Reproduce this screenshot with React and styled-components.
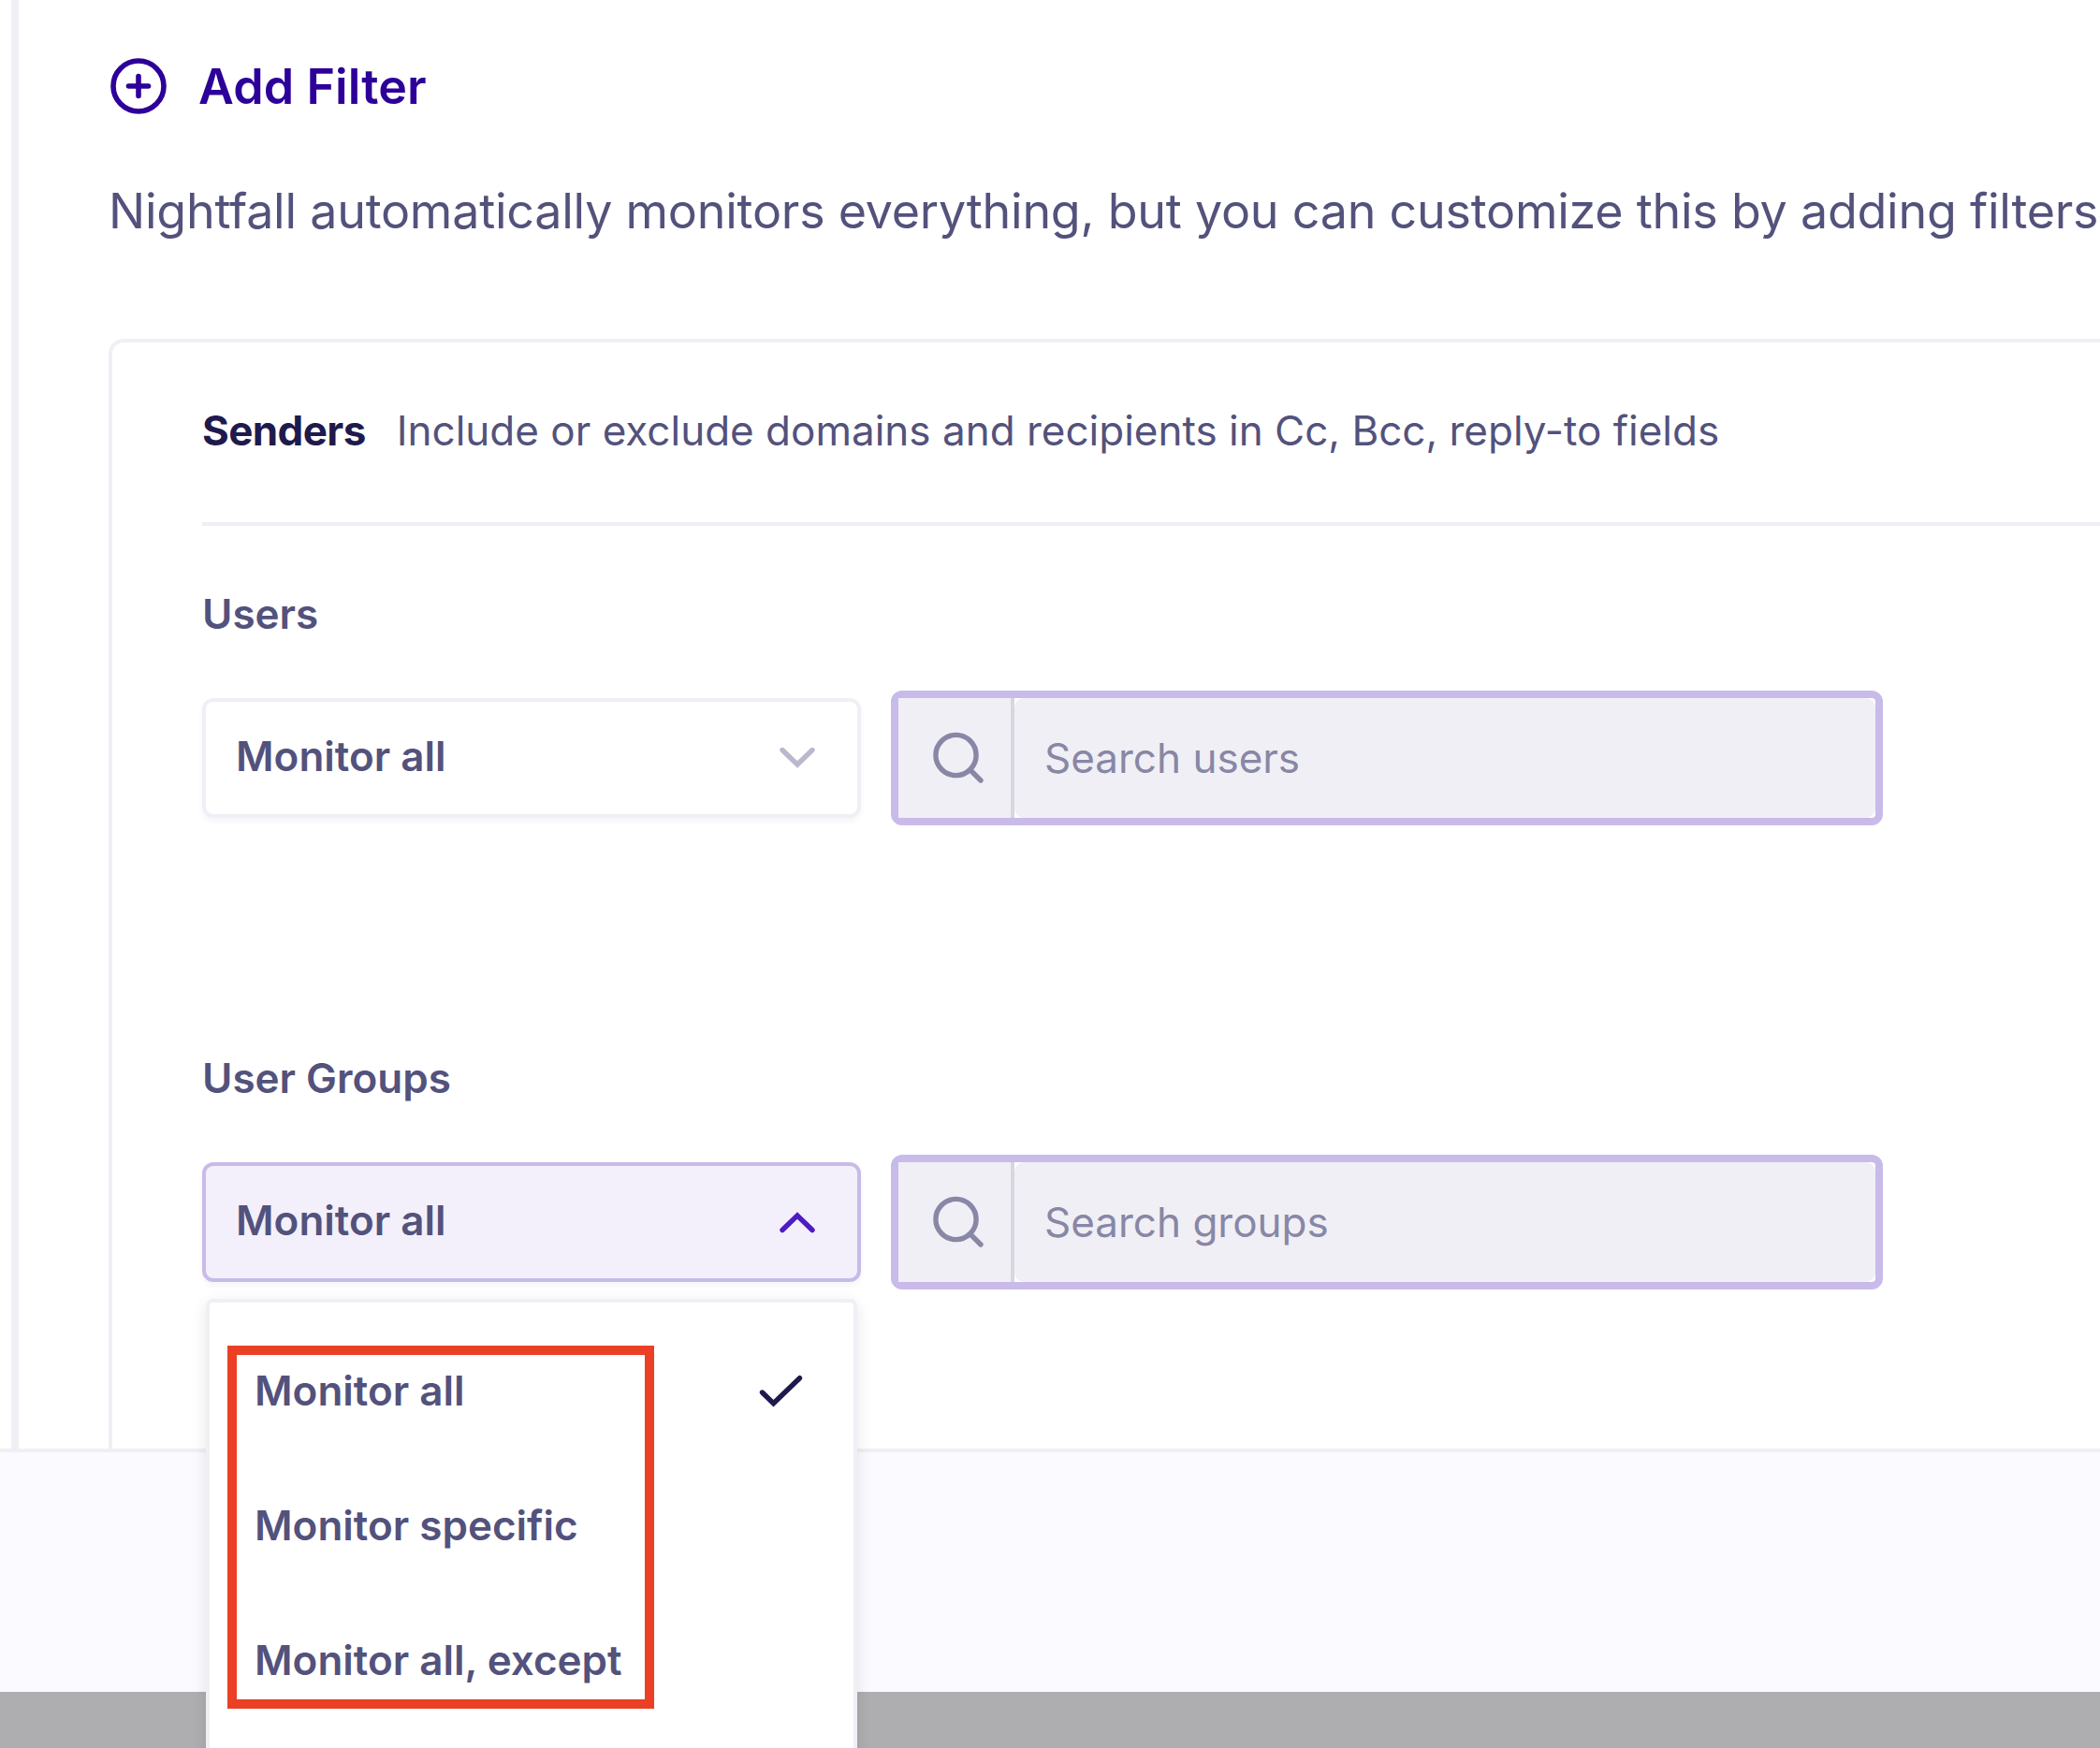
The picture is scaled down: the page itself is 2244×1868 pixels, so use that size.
import React from "react";
import styled, { createGlobalStyle } from "styled-components";

const color = {
  ink: "#1f1a4d",
  text: "#53527c",
  muted: "#8887a6",
  brand: "#2c0099",
  accent: "#4e1bc6",
  line: "#f0eff5",
  lilac: "#c8bbe9",
  lilacSoft: "#f3f0fb",
  annotation: "#ea4025",
};

const GlobalStyle = createGlobalStyle`
  * { box-sizing: border-box; }
  body {
    margin: 0;
    background: #ffffff;
    color: ${color.text};
    font-family: Inter, "Liberation Sans", sans-serif;
  }
`;

const Page = styled.div`
  width: 2244px;
  height: 1868px;
  overflow: hidden;
  display: flex;
  flex-direction: column;
`;

const Workspace = styled.div`
  flex: none;
  height: 1548px;
  display: flex;
  padding-left: 12px;
`;

const Main = styled.main`
  flex: 1;
  min-width: 0;
  display: flex;
  flex-direction: column;
  border-left: 8px solid ${color.line};
  padding: 61px 0 0 96px;
`;

const AddFilterButton = styled.button`
  display: flex;
  flex: none;
  align-items: center;
  gap: 32px;
  height: 62px;
  padding: 0;
  border: 0;
  background: none;
  color: ${color.brand};
  font: inherit;
  font-size: 52px;
  font-weight: 600;
  line-height: 60px;
  letter-spacing: 0.1px;
`;

const ButtonLabel = styled.span`
  padding-top: 1px;
`;

const Hint = styled.p`
  margin: 73px 0 106px;
  font-size: 52px;
  line-height: 60px;
  letter-spacing: -0.24px;
  white-space: nowrap;
`;

const Card = styled.section`
  flex: 1;
  min-height: 0;
  margin-right: -40px;
  padding-left: 96px;
  border: 4px solid ${color.line};
  border-bottom: 0;
  border-radius: 16px 16px 0 0;
`;

const CardHeader = styled.header`
  display: flex;
  align-items: center;
  gap: 33px;
  height: 196px;
  padding-bottom: 4px;
  border-bottom: 4px solid ${color.line};
  font-size: 44px;
  line-height: 56px;
  white-space: nowrap;
`;

const CardTitle = styled.h2`
  margin: 0;
  font-size: inherit;
  font-weight: 700;
  letter-spacing: -0.6px;
  color: ${color.ink};
`;

const Field = styled.div`
  height: 496px;
  padding-top: 66px;
`;

const FieldLabel = styled.div`
  margin-bottom: 62px;
  font-size: 44px;
  font-weight: 600;
  line-height: 56px;
`;

const Controls = styled.div`
  display: flex;
  align-items: center;
  gap: 32px;
  height: 128px;
`;

const Select = styled.div`
  position: relative;
  width: 704px;
  height: 128px;
`;

const SelectTrigger = styled.div`
  display: flex;
  align-items: center;
  justify-content: space-between;
  height: 100%;
  padding: 0 40px 0 32px;
  border: 4px solid ${(p) => (p.$open ? color.lilac : color.line)};
  border-radius: 12px;
  background: ${(p) => (p.$open ? color.lilacSoft : "#ffffff")};
  box-shadow: 0 4px 6px rgba(31, 26, 77, 0.04);
`;

const Value = styled.span`
  padding-bottom: 4px;
  font-size: 44px;
  font-weight: 600;
  line-height: 56px;
`;

const Chevron = styled.svg`
  width: 48px;
  height: 32px;
  fill: none;
  stroke: ${(p) => (p.$open ? color.accent : "#b9b8cc")};
  stroke-width: 5.4;
  stroke-linecap: round;
  stroke-linejoin: miter;
  transform: ${(p) => (p.$open ? "none" : "scaleY(-1)")};
`;

const Menu = styled.ul`
  position: absolute;
  z-index: 2;
  top: 146px;
  left: 4px;
  width: 696px;
  height: 520px;
  margin: 0;
  padding: 22px 0 0;
  list-style: none;
  background: #ffffff;
  border: 4px solid ${color.line};
  border-radius: 8px;
  box-shadow: 0 4px 16px rgba(0, 0, 0, 0.1);
`;

const MenuItem = styled.li`
  display: flex;
  align-items: center;
  justify-content: space-between;
  height: 144px;
  padding: 0 48px;
  font-size: 44px;
  font-weight: 600;
  line-height: 56px;
`;

const Highlight = styled.div`
  position: absolute;
  top: 45.5px;
  left: 19.3px;
  width: 456px;
  height: 388px;
  border: 10px solid ${color.annotation};
  pointer-events: none;
`;

const Search = styled.label`
  display: flex;
  flex: 0 0 1060px;
  height: 144px;
  border: 8px solid ${color.lilac};
  border-radius: 12px;
  background: #ffffff;
`;

const SearchIconCell = styled.span`
  display: flex;
  align-items: center;
  justify-content: center;
  width: 124px;
  background: ${color.line};
  border-right: 4px solid #d7d6e1;
`;

const SearchText = styled.span`
  flex: 1;
  display: flex;
  align-items: center;
  padding-left: 32px;
  border-radius: 10px;
  background: ${color.line};
  color: ${color.muted};
  font-size: 44px;
  line-height: 56px;
`;

const Footer = styled.footer`
  flex: 0 0 260px;
  border-top: 4px solid ${color.line};
  background: #fafaff;
`;

const Backdrop = styled.div`
  flex: 1;
  background: #aeaeb0;
`;

function PlusCircleIcon() {
  return (
    <svg width="64" height="62" viewBox="0 0 64 62" fill="none" stroke="currentColor" strokeWidth="5.6" strokeLinecap="round">
      <circle cx="32" cy="31" r="27" />
      <path d="M32 20.500v21M21.500 31h21" />
    </svg>
  );
}

function SearchIcon() {
  return (
    <svg width="64" height="64" viewBox="0 0 64 64" fill="none" stroke={color.muted} strokeWidth="5.4" strokeLinecap="round">
      <circle cx="33.500" cy="29" r="21.6" />
      <path d="M49 45l11 11" />
    </svg>
  );
}

function CheckIcon() {
  return (
    <svg width="56" height="44" viewBox="0 0 56 44" fill="none" stroke={color.ink} strokeWidth="5.4" strokeLinecap="round">
      <path d="M6.500 24l12 11.700l28-27" />
    </svg>
  );
}

const OPTIONS = ["Monitor all", "Monitor specific", "Monitor all, except"];

function FilterField({ label, placeholder, open }) {
  return (
    <Field>
      <FieldLabel>{label}</FieldLabel>
      <Controls>
        <Select>
          <SelectTrigger $open={open}>
            <Value>{OPTIONS[0]}</Value>
            <Chevron $open={open} viewBox="0 0 48 32">
              <path d="M8 24.500L24 9l16 15.500" />
            </Chevron>
          </SelectTrigger>
          {open && (
            <Menu>
              {OPTIONS.map((option, i) => (
                <MenuItem key={option}>
                  {option}
                  {i === 0 && <CheckIcon />}
                </MenuItem>
              ))}
              <Highlight />
            </Menu>
          )}
        </Select>
        <Search>
          <SearchIconCell>
            <SearchIcon />
          </SearchIconCell>
          <SearchText>{placeholder}</SearchText>
        </Search>
      </Controls>
    </Field>
  );
}

export default function App() {
  return (
    <>
      <GlobalStyle />
      <Page>
        <Workspace>
          <Main>
            <AddFilterButton>
              <PlusCircleIcon />
              <ButtonLabel>Add Filter</ButtonLabel>
            </AddFilterButton>
            <Hint>Nightfall automatically monitors everything, but you can customize this by adding filters</Hint>
            <Card>
              <CardHeader>
                <CardTitle>Senders</CardTitle>
                <span>Include or exclude domains and recipients in Cc, Bcc, reply-to fields</span>
              </CardHeader>
              <FilterField label="Users" placeholder="Search users" />
              <FilterField label="User Groups" placeholder="Search groups" open />
            </Card>
          </Main>
        </Workspace>
        <Footer />
        <Backdrop />
      </Page>
    </>
  );
}
